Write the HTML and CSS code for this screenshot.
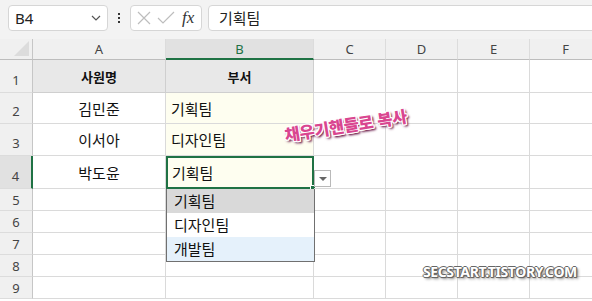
FILE: index.html
```html
<!DOCTYPE html>
<html lang="ko">
<head>
    <meta charset="UTF-8">
    <title>데이터 유효성 검사</title>
    <link rel="stylesheet" href="styles.css">
</head>
<body>

    <!-- 수식 입력줄 -->
    <div class="formula-bar">
        <div class="name-box">
            <span>B4</span>
            <svg class="chev" width="10" height="6" viewBox="0 0 10 6"><path d="M1 1 L5 5 L9 1" fill="none" stroke="#555" stroke-width="1.2"/></svg>
        </div>
        <div class="dots"><i></i><i></i><i></i></div>
        <div class="fx-box">
            <svg width="16" height="16" viewBox="0 0 16 16"><path d="M2 2 L14 14 M14 2 L2 14" stroke="#bdbdbd" stroke-width="1.2"/></svg>
            <svg width="18" height="16" viewBox="0 0 18 16"><path d="M1 8 L6 13 L17 2" fill="none" stroke="#bdbdbd" stroke-width="1.2"/></svg>
            <span class="fx">fx</span>
        </div>
        <div class="formula-input">기획팀</div>
    </div>

    <!-- 시트 -->
    <div class="sheet">
        <div class="grid">
            <div class="corner"><span class="tri"></span></div>
            <div class="col-head">A</div>
            <div class="col-head active">B</div>
            <div class="col-head">C</div>
            <div class="col-head">D</div>
            <div class="col-head">E</div>
            <div class="col-head">F</div>

            <div class="row-head">1</div>
            <div class="cell title">사원명</div>
            <div class="cell title">부서</div>
            <div class="cell"></div><div class="cell"></div><div class="cell"></div><div class="cell"></div>

            <div class="row-head">2</div>
            <div class="cell center">김민준</div>
            <div class="cell dept">기획팀</div>
            <div class="cell"></div><div class="cell"></div><div class="cell"></div><div class="cell"></div>

            <div class="row-head">3</div>
            <div class="cell center">이서아</div>
            <div class="cell dept">디자인팀</div>
            <div class="cell"></div><div class="cell"></div><div class="cell"></div><div class="cell"></div>

            <div class="row-head active">4</div>
            <div class="cell center">박도윤</div>
            <div class="cell dept selected">기획팀<span class="handle"></span></div>
            <div class="cell"></div><div class="cell"></div><div class="cell"></div><div class="cell"></div>

            <div class="row-head small">5</div>
            <div class="cell"></div><div class="cell"></div><div class="cell"></div><div class="cell"></div><div class="cell"></div><div class="cell"></div>
            <div class="row-head small">6</div>
            <div class="cell"></div><div class="cell"></div><div class="cell"></div><div class="cell"></div><div class="cell"></div><div class="cell"></div>
            <div class="row-head small">7</div>
            <div class="cell"></div><div class="cell"></div><div class="cell"></div><div class="cell"></div><div class="cell"></div><div class="cell"></div>
            <div class="row-head small">8</div>
            <div class="cell"></div><div class="cell"></div><div class="cell"></div><div class="cell"></div><div class="cell"></div><div class="cell"></div>
            <div class="row-head small">9</div>
            <div class="cell"></div><div class="cell"></div><div class="cell"></div><div class="cell"></div><div class="cell"></div><div class="cell"></div>
        </div>

        <!-- 목록 드롭다운 -->
        <div class="drop-btn"><span></span></div>
        <div class="drop-list">
            <div class="item hover">기획팀</div>
            <div class="item">디자인팀</div>
            <div class="item sel">개발팀</div>
        </div>

        <div class="note">채우기핸들로 복사</div>
        <div class="watermark">SECSTART.TISTORY.COM</div>
    </div>

</body>
</html>
```

FILE: styles.css
```css
* {
    margin: 0;
    padding: 0;
    box-sizing: border-box;
}
body {
    width: 592px;
    height: 301px;
    overflow: hidden;
    background-color: #f3f3f3;
    font-family: "Noto Sans", "Noto Sans CJK KR", sans-serif;
    color: #222;
}
.formula-bar {
    height: 39px;
    display: flex;
    align-items: flex-start;
    padding: 5px 0 0 8px;
}
.name-box, .fx-box, .formula-input {
    height: 26px;
    background-color: #fff;
    border: 1px solid #d6d6d6;
    border-radius: 4px;
}
.name-box {
    width: 100px;
    display: flex;
    align-items: center;
    justify-content: space-between;
    padding: 0 6px 0 6px;
    font-size: 15px;
    color: #222;
}
.dots {
    width: 22px;
    height: 26px;
    display: flex;
    flex-direction: column;
    align-items: center;
    justify-content: center;
    gap: 2px;
}
.dots i {
    width: 2px;
    height: 2px;
    background-color: #333;
}
.fx-box {
    width: 72px;
    display: flex;
    align-items: center;
    gap: 5px;
    padding-left: 5px;
}
.fx {
    font-family: "Liberation Serif", serif;
    font-style: italic;
    font-size: 17px;
    color: #333;
    margin-left: 2px;
}
.formula-input {
    margin-left: 6px;
    flex: 1;
    margin-right: -10px;
    padding-left: 10px;
    font-family: "Noto Sans CJK KR", sans-serif;
    font-size: 15px;
    line-height: 24px;
    color: #222;
}
.sheet {
    position: relative;
    height: 262px;
    background-color: #fff;
}
.grid {
    display: grid;
    grid-template-columns: 33px 133px 148px 72px 72px 72px 72px;
    grid-template-rows: 21px 33px 31px 32px 33px 22px 22px 22px 22px 22px;
}
.corner {
    background-color: #f0f0f0;
    border-right: 1px solid #c6c6c6;
    border-bottom: 1px solid #bdbdbd;
    position: relative;
}
.corner .tri {
    position: absolute;
    right: 3px;
    bottom: 3px;
    width: 0;
    height: 0;
    border-left: 15px solid transparent;
    border-bottom: 15px solid #dcdcdc;
}
.col-head {
    background-color: #f0f0f0;
    border-right: 1px solid #dcdcdc;
    border-bottom: 1px solid #bdbdbd;
    font-size: 13px;
    color: #444;
    display: flex;
    align-items: center;
    justify-content: center;
}
.col-head.active {
    background-color: #e1e1e1;
    color: #1f7244;
    border-bottom: 2px solid #1f7244;
}
.row-head {
    background-color: #f0f0f0;
    border-right: 1px solid #c6c6c6;
    border-bottom: 1px solid #dcdcdc;
    font-size: 13px;
    color: #444;
    display: flex;
    align-items: flex-end;
    justify-content: center;
    padding-bottom: 3px;
}
.row-head.small {
    align-items: center;
    padding-bottom: 0;
}
.row-head.active {
    background-color: #e1e1e1;
    border-right: 2px solid #1f7244;
}
.cell {
    border-right: 1px solid #dadada;
    border-bottom: 1px solid #dadada;
    font-family: "Noto Sans CJK KR", sans-serif;
    font-size: 15px;
    color: #111;
    display: flex;
    align-items: center;
    position: relative;
}
.cell.title {
    background-color: #e8e8e8;
    border-color: #cfcfcf;
    justify-content: center;
    font-weight: bold;
    font-size: 13px;
}
.cell.center {
    justify-content: center;
}
.cell.dept {
    background-color: #fefef0;
    padding-left: 5px;
}
.cell.selected {
    border: 2px solid #1f7244;
    padding-left: 4px;
}
.handle {
    position: absolute;
    right: -4px;
    bottom: -4px;
    width: 6px;
    height: 6px;
    background-color: #1f7244;
    border: 1px solid #fff;
}
.drop-btn {
    position: absolute;
    left: 314px;
    top: 131px;
    width: 17px;
    height: 17px;
    background-color: #fff;
    border: 1px solid #b9b9b9;
    display: flex;
    align-items: center;
    justify-content: center;
}
.drop-btn span {
    width: 0;
    height: 0;
    border-left: 4px solid transparent;
    border-right: 4px solid transparent;
    border-top: 4px solid #666;
}
.drop-list {
    position: absolute;
    left: 166px;
    top: 150px;
    width: 149px;
    background-color: #fff;
    border: 1px solid #707070;
    border-top: none;
}
.drop-list .item {
    height: 24px;
    padding-left: 7px;
    font-family: "Noto Sans CJK KR", sans-serif;
    font-size: 15px;
    line-height: 24px;
    color: #111;
}
.drop-list .item.hover {
    background-color: #d9d9d9;
}
.drop-list .item.sel {
    background-color: #e5f1fb;
}
.note {
    position: absolute;
    left: 284px;
    top: 74px;
    font-family: "Noto Sans CJK KR", sans-serif;
    font-weight: 900;
    font-size: 16.5px;
    letter-spacing: -0.3px;
    color: #d94690;
    transform: rotate(-9deg);
    text-shadow: 1px 0 0 #fff, -1px 0 0 #fff, 0 1px 0 #fff, 0 -1px 0 #fff,
                 1px 1px 0 #fff, -1px -1px 0 #fff, 1px -1px 0 #fff, -1px 1px 0 #fff,
                 2px 2px 2px #6b1d4c, 1px 2px 3px #6b1d4c;
}
.watermark {
    position: absolute;
    left: 423px;
    top: 223px;
    font-family: "Noto Sans", sans-serif;
    font-weight: bold;
    font-size: 14px;
    letter-spacing: -0.4px;
    color: #fff;
    text-shadow: 1px 0 0 #666, -1px 0 0 #666, 0 1px 0 #666, 0 -1px 0 #666,
                 1px 1px 1px #555, 2px 2px 3px #888;
}
```
